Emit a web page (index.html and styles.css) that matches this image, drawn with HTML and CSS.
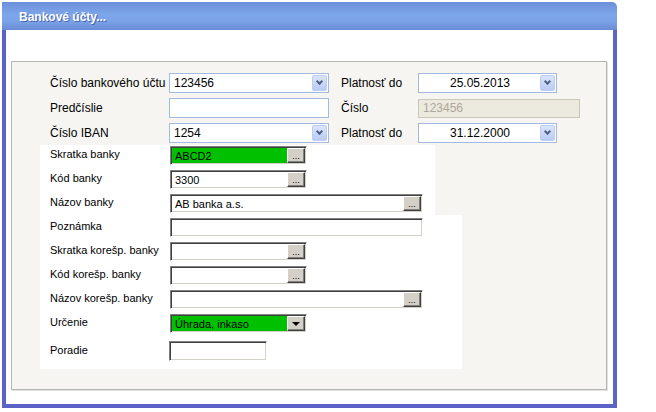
FILE: index.html
```html
<!DOCTYPE html>
<html lang="sk">
<head>
    <meta charset="UTF-8">
    <title>Bankové účty</title>
    <link rel="stylesheet" href="styles.css">
</head>
<body>

    <div class="window">
        <div class="titlebar">Bankové účty...</div>

        <div class="window-body">
            <div class="panel">

                <!-- horne riadky (XP ovladace) -->
                <div class="top-rows">
                    <div class="row">
                        <span class="lbl">Číslo bankového účtu</span>
                        <div class="combo"><span class="val">123456</span><span class="drop"></span></div>
                        <span class="lbl2">Platnosť do</span>
                        <div class="combo date"><span class="val">25.05.2013</span><span class="drop"></span></div>
                    </div>
                    <div class="row">
                        <span class="lbl">Predčíslie</span>
                        <div class="xp-input"></div>
                        <span class="lbl2">Číslo</span>
                        <div class="xp-input disabled">123456</div>
                    </div>
                    <div class="row">
                        <span class="lbl">Číslo IBAN</span>
                        <div class="combo"><span class="val">1254</span><span class="drop"></span></div>
                        <span class="lbl2">Platnosť do</span>
                        <div class="combo date"><span class="val">31.12.2000</span><span class="drop"></span></div>
                    </div>
                </div>

                <!-- banka -->
                <div class="sheet sheet-a">
                    <div class="frow">
                        <span class="flbl">Skratka banky</span>
                        <div class="field short green"><span class="val">ABCD2</span><span class="dots">...</span></div>
                    </div>
                    <div class="frow">
                        <span class="flbl">Kód banky</span>
                        <div class="field short"><span class="val">3300</span><span class="dots">...</span></div>
                    </div>
                    <div class="frow">
                        <span class="flbl">Názov banky</span>
                        <div class="field long"><span class="val">AB banka a.s.</span><span class="dots">...</span></div>
                    </div>
                </div>

                <!-- korespondencna banka -->
                <div class="sheet sheet-b">
                    <div class="frow">
                        <span class="flbl">Poznámka</span>
                        <div class="field long"><span class="val"></span></div>
                    </div>
                    <div class="frow">
                        <span class="flbl">Skratka korešp. banky</span>
                        <div class="field short"><span class="val"></span><span class="dots">...</span></div>
                    </div>
                    <div class="frow">
                        <span class="flbl">Kód korešp. banky</span>
                        <div class="field short"><span class="val"></span><span class="dots">...</span></div>
                    </div>
                    <div class="frow">
                        <span class="flbl">Názov korešp. banky</span>
                        <div class="field long"><span class="val"></span><span class="dots">...</span></div>
                    </div>
                    <div class="frow">
                        <span class="flbl">Určenie</span>
                        <div class="field short green"><span class="val">Úhrada, inkaso</span><span class="dots arrow"></span></div>
                    </div>
                    <div class="frow last">
                        <span class="flbl">Poradie</span>
                        <div class="field tiny"><span class="val"></span></div>
                    </div>
                </div>

            </div>
        </div>
    </div>

</body>
</html>
```

FILE: styles.css
```css
body {
    margin: 0;
    padding: 0;
    background-color: #fff;
    font-family: "Liberation Sans", Arial, sans-serif;
    color: #000;
}

.window {
    margin: 2px 0 0 2px;
    width: 615px;
}

.titlebar {
    height: 28px;
    line-height: 30px;
    padding-left: 17px;
    color: #fff;
    font-size: 12px;
    font-weight: bold;
    text-shadow: 1px 1px 0 #4a64b0;
    background: linear-gradient(#6c8fda, #7ea6ea 45%, #7aa2e6 70%, #6a8bd6);
    border-top-right-radius: 5px;
}

.window-body {
    height: 374px;
    background-color: #fff;
    border: 4px solid #5c62c6;
    border-top: none;
    padding: 31px 6px 0 5px;
    box-sizing: border-box;
    height: 378px;
}

.panel {
    width: 596px;
    height: 329px;
    box-sizing: border-box;
    border: 1px solid #b4b4b0;
    box-shadow: 1px 1px 0 #e2e2de;
    background-color: #f6f5f2;
    padding-top: 11px;
}

/* horne riadky */
.top-rows {
    padding-left: 38px;
}

.row {
    display: flex;
    align-items: center;
    height: 20px;
    margin-bottom: 5px;
    font-size: 12px;
}

.row:last-child {
    margin-bottom: 0;
}

.lbl {
    width: 119px;
}

.lbl2 {
    width: 77px;
    margin-left: 12px;
}

.combo {
    width: 160px;
    height: 20px;
    box-sizing: border-box;
    border: 1px solid #a4b9e0;
    background-color: #fff;
    display: flex;
    align-items: center;
    padding: 1px;
}

.combo .val {
    flex: 1;
    padding-left: 3px;
}

.combo.date {
    width: 139px;
}

.combo.date .val {
    text-align: center;
    padding-left: 0;
}

.drop {
    width: 15px;
    height: 16px;
    box-sizing: border-box;
    border: 1px solid #bccdf3;
    border-radius: 2px;
    background: linear-gradient(#dbe5fb, #b9cbf6);
    position: relative;
}

.drop::after {
    content: "";
    position: absolute;
    left: 4px;
    top: 3px;
    width: 3px;
    height: 3px;
    border-right: 2px solid #4d6185;
    border-bottom: 2px solid #4d6185;
    transform: rotate(45deg);
}

.xp-input {
    width: 160px;
    height: 20px;
    box-sizing: border-box;
    border: 1px solid #a4b9e0;
    background-color: #fff;
}

.xp-input.disabled {
    width: 162px;
    height: 19px;
    background-color: #ece9de;
    border-color: #c9c7ba;
    color: #aca899;
    padding-left: 4px;
    line-height: 17px;
}

/* spodna cast */
.sheet {
    background-color: #fff;
    margin-left: 28px;
    padding-left: 10px;
    box-sizing: border-box;
}

.sheet-a {
    width: 395px;
    margin-top: 2px;
    padding-top: 1px;
    padding-bottom: 2px;
}

.sheet-b {
    width: 422px;
    padding-top: 3px;
    padding-bottom: 8px;
}

.frow {
    display: flex;
    align-items: center;
    height: 19px;
    margin-bottom: 5px;
    font-size: 11px;
}

.sheet-a .frow:last-child {
    margin-bottom: 0;
}

.frow.last {
    margin-top: 8px;
    margin-bottom: 0;
    height: 20px;
}

.flbl {
    width: 120px;
    margin-top: -3px;
}

.field {
    height: 19px;
    box-sizing: border-box;
    border: 1px solid;
    border-color: #808080 #fff #fff #808080;
    box-shadow: inset 1px 1px 0 #404040, inset -1px -1px 0 #d4d0c8;
    background-color: #fff;
    display: flex;
    align-items: center;
    padding: 1px 1px 1px 2px;
}

.field .val {
    flex: 1;
    padding-left: 2px;
}

.field.green {
    background-color: #00c000;
}

.short {
    width: 137px;
}

.long {
    width: 253px;
}

.tiny {
    width: 98px;
    height: 20px;
    margin-left: -1px;
}

.dots {
    width: 18px;
    height: 15px;
    box-sizing: border-box;
    background-color: #d4d0c8;
    border: 1px solid;
    border-color: #fff #404040 #404040 #fff;
    box-shadow: inset -1px -1px 0 #808080;
    font-size: 9px;
    line-height: 14px;
    text-align: center;
    color: #000;
}

.dots.arrow {
    position: relative;
}

.dots.arrow::after {
    content: "";
    position: absolute;
    left: 4px;
    top: 5px;
    border-left: 4px solid transparent;
    border-right: 4px solid transparent;
    border-top: 4px solid #000;
}
```
